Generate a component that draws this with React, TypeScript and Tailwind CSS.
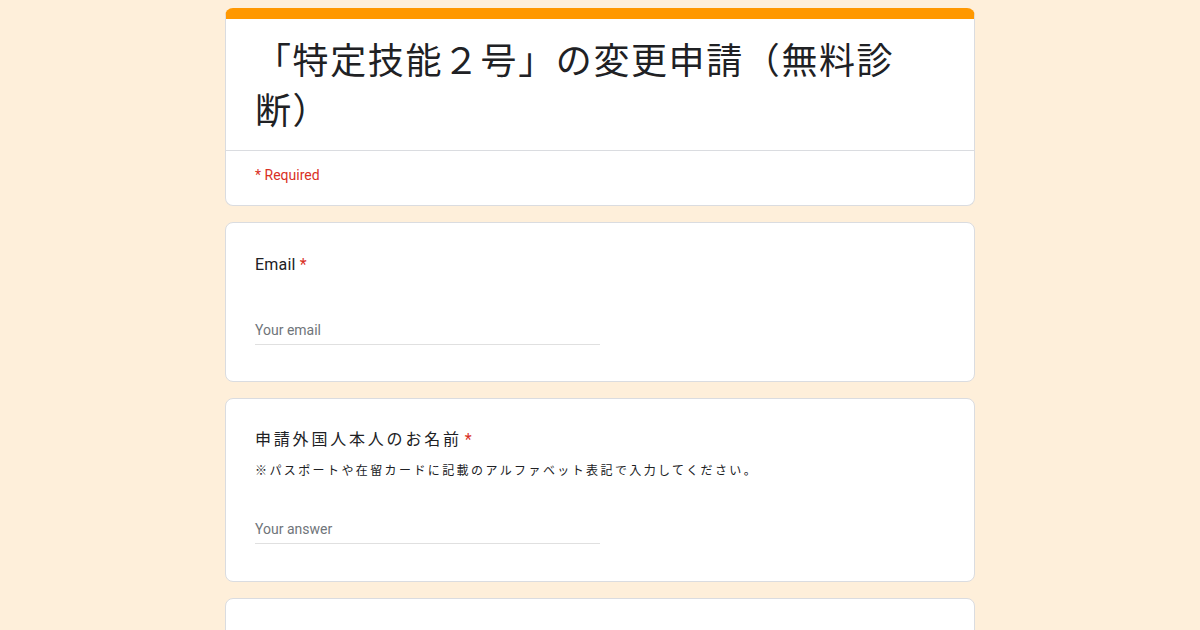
import React from 'react';

const jp = '[font-family:Roboto,"Noto_Sans_CJK_JP",sans-serif]';

const Card = ({ children, className = '' }: { children: React.ReactNode; className?: string }) => (
  <div className={`shrink-0 bg-white border border-[#dadce0] rounded-lg ${className}`}>{children}</div>
);

const TextInput = ({ placeholder }: { placeholder: string }) => (
  <div className="w-[345px] border-b border-[#e0e0e0] pb-[4px]">
    <div className="text-[14px] leading-[20px] text-[#70757a] [font-family:Roboto,sans-serif]">{placeholder}</div>
  </div>
);

export default function App() {
  return (
    <div className={`h-[630px] overflow-hidden bg-[#feefda] flex justify-center ${jp}`}>
      <div className="w-[750px] pt-[8px] flex flex-col gap-4">
        <Card className="border-t-[11px] border-t-[#ff9800] overflow-hidden">
          <div className="px-[29px] pt-[14px] pb-[17px]">
            <h1 className="text-[36px] leading-[50px] tracking-[1.6px] text-[#202124] [font-family:'Noto_Sans_CJK_JP',sans-serif]">
              「特定技能２号」の変更申請（無料診断）
            </h1>
          </div>
          <div className="border-t border-[#dadce0] px-[29px] pt-[12px] pb-[18px]">
            <span className="text-[14px] leading-[20px] text-[#d93025] [font-family:Roboto,sans-serif]">* Required</span>
          </div>
        </Card>

        <Card className="px-[29px] pt-[30px] pb-[36px]">
          <div className="text-[16px] leading-[24px] text-[#202124] tracking-[0.2px]">
            Email <span className="text-[#d93025]">*</span>
          </div>
          <div className="mt-[43px]">
            <TextInput placeholder="Your email" />
          </div>
        </Card>

        <Card className="px-[29px] pt-[29px] pb-[37px]">
          <div className="text-[16px] leading-[24px] text-[#202124] tracking-[2.8px]">
            申請外国人本人のお名前<span className="text-[#d93025] ml-[3px]">*</span>
          </div>
          <div className="mt-[9px] text-[12px] leading-[20px] tracking-[2.4px] text-[#202124]">
            ※パスポートや在留カードに記載のアルファベット表記で入力してください。
          </div>
          <div className="mt-[38px]">
            <TextInput placeholder="Your answer" />
          </div>
        </Card>

        <Card className="h-[120px]">
          <div />
        </Card>
      </div>
    </div>
  );
}
